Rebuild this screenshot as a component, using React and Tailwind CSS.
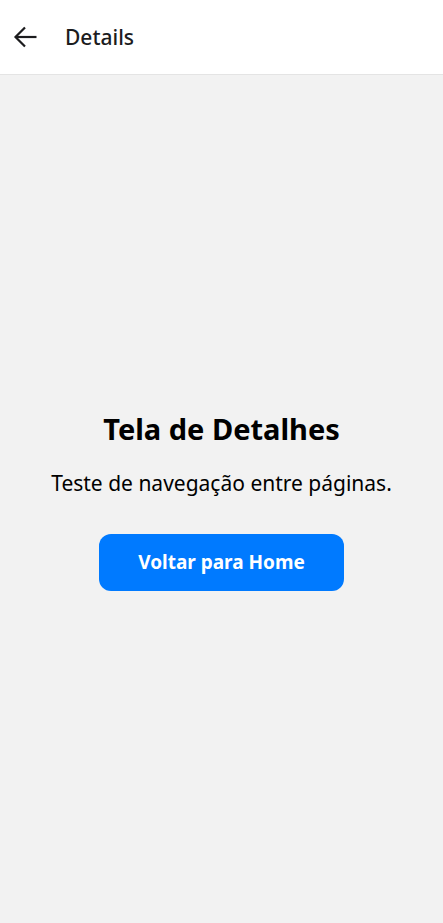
const BackArrow = () => (
    <svg width="24" height="24" viewBox="0 0 24 24" fill="none" stroke="#1c1c1e" strokeWidth="2.2" strokeLinecap="butt">
        <path d="M2.5 12H23.5" />
        <path d="M12 2.5L2.5 12L12 21.5" />
    </svg>
);

export default function App() {
    return (
        <div
            className="flex h-[923px] w-full flex-col bg-[#f2f2f2]"
            style={{ fontFamily: '"Noto Sans", "Open Sans", sans-serif' }}
        >
            <header className="flex h-[75px] shrink-0 items-center border-b border-[#e4e4e4] bg-white pl-[13px]">
                <button className="flex h-6 w-6 items-center justify-center">
                    <BackArrow />
                </button>
                <h1 className="ml-[28px] text-[21px] font-medium leading-7 text-[#1c1c1e]">Details</h1>
            </header>

            <main className="flex flex-1 flex-col items-center justify-center pt-1">
                <h2 className="text-[29px] font-bold leading-9 text-black">Tela de Detalhes</h2>
                <p className="mt-[22px] text-[21px] leading-7 text-black">
                    Teste de navegação entre páginas.
                </p>
                <button className="mt-[37px] h-[57px] w-[245px] rounded-xl bg-[#007aff] text-[19px] font-bold text-white">
                    Voltar para Home
                </button>
            </main>
        </div>
    );
}
